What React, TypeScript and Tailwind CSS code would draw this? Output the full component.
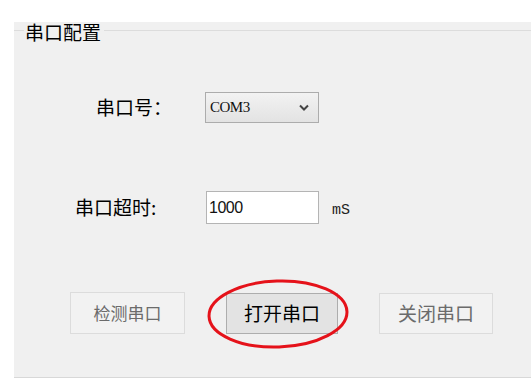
import React from 'react';

const cjk = "font-['Noto_Sans_CJK_SC','Noto_Sans',sans-serif]";

const ChevronDown: React.FC = () => (
  <svg width="10" height="7" viewBox="0 0 10 7" className="text-[#444]">
    <path d="M1 1.5 L5 5.5 L9 1.5" fill="none" stroke="currentColor" strokeWidth="2" />
  </svg>
);

const App: React.FC = () => {
  return (
    <div className="relative w-[531px] h-[382px] bg-white overflow-hidden">
      <div className="ml-[14px] mt-[22px] h-[356px] bg-[#f0f0f0] border-b border-[#d8d8d8] flex flex-col">
        {/* group title */}
        <div className="flex items-start h-[20px]">
          <div className="w-[10px] mt-[8px] h-px bg-[#dcdcdc]" />
          <span className={`${cjk} text-[19px] leading-[20px] text-black px-[1px]`}>串口配置</span>
          <div className="flex-1 mt-[8px] h-px bg-[#dcdcdc] ml-[2px]" />
        </div>

        {/* port */}
        <div className="flex items-center mt-[50px] pl-[82px]">
          <span className={`${cjk} w-[109px] text-[19px] text-black`}>串口号：</span>
          <div className="w-[114px] h-[31px] border border-[#acacac] bg-gradient-to-b from-[#f2f2f2] to-[#e3e3e3] flex items-center justify-between pl-[4px] pr-[9px]">
            <span className="font-['Liberation_Serif',serif] text-[15px] text-[#111] tracking-[-0.5px]">COM3</span>
            <ChevronDown />
          </div>
        </div>

        {/* timeout */}
        <div className="flex items-center mt-[68px] pl-[61px]">
          <span className={`${cjk} w-[131px] text-[19px] text-black`}>串口超时:</span>
          <div className="w-[113px] h-[33px] border border-[#b4b4b4] bg-white flex items-center pl-[2px]">
            <span className="font-['Liberation_Sans',sans-serif] text-[16px] text-[#111] tracking-[-0.5px]">1000</span>
          </div>
          <span className="font-['Liberation_Mono',monospace] text-[15px] text-[#222] ml-[13px] mt-[8px]">mS</span>
        </div>

        {/* buttons */}
        <div className="flex items-center gap-[41px] mt-[68px] pl-[56px]">
          <div className={`${cjk} w-[115px] h-[42px] border border-[#dcdcdc] bg-[#f2f2f2] flex items-center justify-center text-[17px] text-[#6b6b6b]`}>
            检测串口
          </div>
          <div className={`${cjk} w-[112px] h-[41px] border border-[#adadad] bg-[#e3e3e3] flex items-center justify-center text-[19px] text-black`}>
            打开串口
          </div>
          <div className={`${cjk} w-[114px] h-[41px] border border-[#dcdcdc] bg-[#f2f2f2] flex items-center justify-center text-[19px] text-[#6b6b6b]`}>
            关闭串口
          </div>
        </div>
      </div>

      {/* red highlight */}
      <svg className="absolute left-[205px] top-[277px]" width="146" height="74" viewBox="0 0 146 74">
        <ellipse cx="73" cy="37" rx="69" ry="33" fill="none" stroke="#e5121a" strokeWidth="3" transform="rotate(-2 73 37)" />
      </svg>
    </div>
  );
};

export default App;
